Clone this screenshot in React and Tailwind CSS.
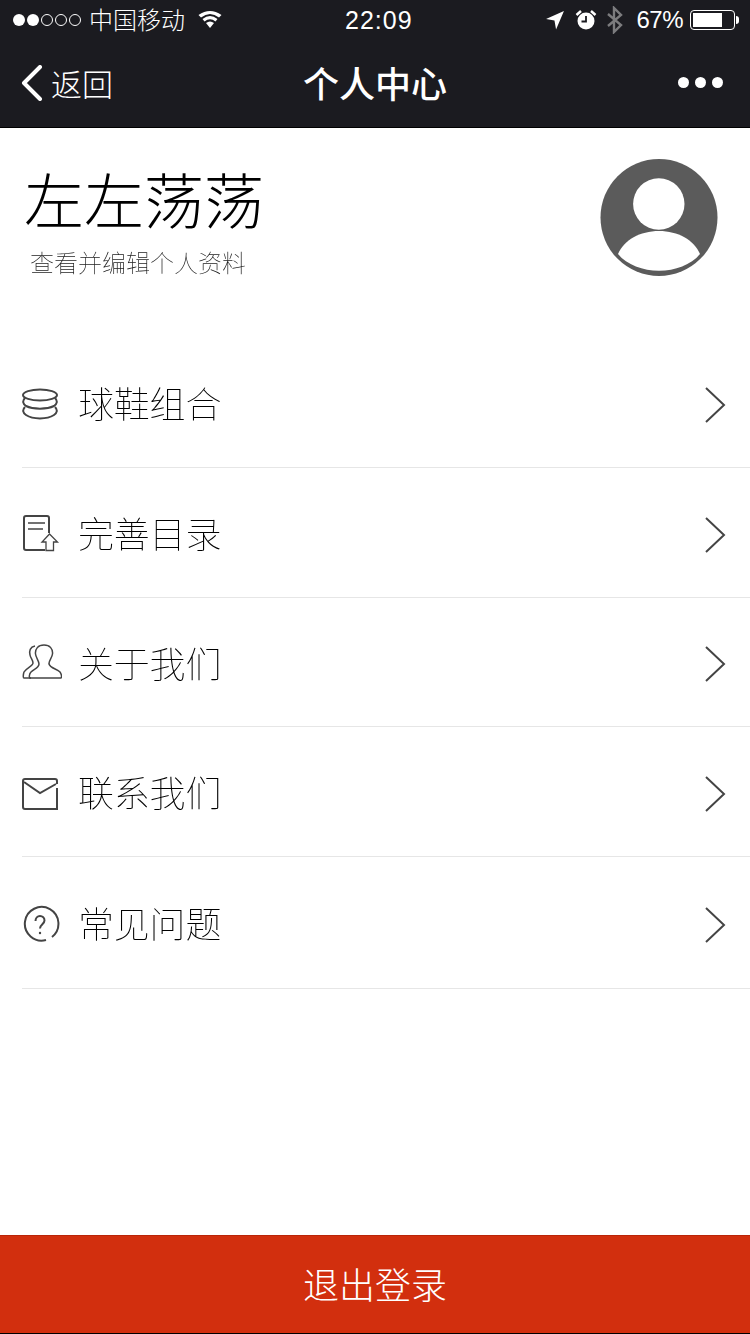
const menuItems = [
  { label: '球鞋组合', icon: 'stack', rowClass: 'h-[130px]' },
  { label: '完善目录', icon: 'doc', rowClass: 'h-[130px]' },
  { label: '关于我们', icon: 'users', rowClass: 'h-[129px]' },
  { label: '联系我们', icon: 'mail', rowClass: 'h-[130px]' },
  { label: '常见问题', icon: 'help', rowClass: 'h-[132px]' },
];

const cjk = { fontFamily: '"Noto Sans CJK SC", sans-serif' };

const MenuIcon = ({ name }) => {
  const common = { width: 40, height: 40, viewBox: '0 0 40 40', fill: 'none', stroke: '#444', strokeWidth: 2 };
  if (name === 'stack') {
    return (
      <svg {...common}>
        <ellipse cx="18" cy="10" rx="17" ry="5.500" />
        <path d="M3 13c-3 3-2 6 1 8 7 3.500 21 3.500 28 0 3-2 4-5 1-8" />
        <path d="M3 22c-3 3-2 6 1 8 7 4.500 21 4.500 28 0 3-2 4-5 1-8" />
      </svg>
    );
  }
  if (name === 'doc') {
    return (
      <svg {...common}>
        <path d="M27 18V3q0-2-2-2H4Q2 1 2 3v30q0 2 2 2h19" />
        <path d="M6 8h17M6 14h15" strokeWidth="1.600" />
        <path d="M24 35.500V27h-4l7.500-8 8 8h-4v8.500z" strokeWidth="1.300" />
      </svg>
    );
  }
  if (name === 'users') {
    return (
      <svg {...common} strokeWidth="1.500">
        <path d="M13 2C8 3 7 7 8 11c.5 3 3 5 3 8 0 3-7 5-9 9-1 3-1 6 0 6h7" />
        <path d="M22 1c-6 0-9 4-8.500 9 .5 4 3.500 7 3.500 10 0 4-5 5-8 8-2 2-2 6-1 6h31c1-1 .5-4-1-6-3-3-10-4-11-8-.5-3 3-6 3.500-10 .5-5-2.500-9-8.500-9z" />
      </svg>
    );
  }
  if (name === 'mail') {
    return (
      <svg {...common}>
        <path d="M35 10V7q0-2-2-2H3Q1 5 1 7v26q0 2 2 2h32V14" />
        <path d="M2 8l16 11 16-9" />
      </svg>
    );
  }
  return (
    <svg {...common}>
      <path d="M24 35A16.800 16.800 0 1 1 30 32" />
      <path d="M13.500 16c0-3 2-5 4.500-5s4.500 2 4.500 4.500c0 3.500-4.500 4-4.500 8" />
      <circle cx="18" cy="28" r="1.200" fill="#444" stroke="none" />
    </svg>
  );
};

const StatusBar = () => (
  <div className="relative flex h-10 items-center pl-[13px] pr-[11px] text-white">
    <div className="flex items-center gap-[2px]">
      <span className="h-[12px] w-[12px] rounded-full bg-white" />
      <span className="h-[12px] w-[12px] rounded-full bg-white" />
      <span className="h-[12px] w-[12px] rounded-full border border-white" />
      <span className="h-[12px] w-[12px] rounded-full border border-white" />
      <span className="h-[12px] w-[12px] rounded-full border border-white" />
    </div>
    <span className="mb-[2px] ml-[8px] text-[24px] leading-none font-light" style={cjk}>中国移动</span>
    <svg className="mb-[1px] ml-[13px]" width="24" height="17" viewBox="0 0 24 17">
      <path d="M12 17l-4-5q4-3 8 0zM6.500 10.500L4.500 8q7.500-6 15 0l-2 2.500q-5.500-4.500-11 0zM3 6.500L.5 4q11.500-8 23 0L21 6.500Q12-.5 3 6.500z" fill="#fff" />
    </svg>
    <span className="absolute left-[345px] top-[7px] text-[25px] leading-[26px] tracking-[1px] font-['Liberation_Sans']">22:09</span>
    <div className="ml-auto flex items-center">
      <svg width="20" height="20" viewBox="0 0 18 19">
        <path d="M17.500 1L10 18.500 8.500 10 .5 8.500z" fill="#fff" />
      </svg>
      <svg className="ml-[10px]" width="22" height="22" viewBox="0 0 22 22">
        <circle cx="11" cy="12" r="8.500" fill="#fff" />
        <path d="M11 7v5.500H6.500" stroke="#1b1b20" strokeWidth="1.800" fill="none" />
        <path d="M1.500 6L6 2M20.500 6L16 2" stroke="#fff" strokeWidth="2.500" />
      </svg>
      <svg className="ml-[9px]" width="17" height="28" viewBox="0 0 17 28">
        <path d="M2 8l13 11-7 7V2l7 7L2 20" stroke="#7c7c7e" strokeWidth="2.400" fill="none" />
      </svg>
      <span className="ml-[13px] text-[24px] leading-none tracking-[-0.5px] font-['Liberation_Sans']">67%</span>
      <div className="ml-[7px] flex items-center">
        <div className="h-[20px] w-[45px] rounded-[4px] border border-white p-[2px]">
          <div className="h-full w-[29px] bg-white" />
        </div>
        <div className="ml-px h-[8px] w-[3px] rounded-r-sm bg-white" />
      </div>
    </div>
  </div>
);

const NavBar = () => (
  <div className="relative flex h-[87px] items-center justify-between pb-[3px] pl-[21px] pr-[27px]">
    <div className="flex items-center text-white">
      <svg className="mt-[2px]" width="22" height="36" viewBox="0 0 22 36" fill="none" stroke="#fff" strokeWidth="4" strokeLinecap="round" strokeLinejoin="round">
        <path d="M19 2L3 18l16 16" />
      </svg>
      <span className="ml-[8px] text-[31px] leading-none font-light" style={cjk}>返回</span>
    </div>
    <div className="absolute inset-x-0 top-[20px] text-center text-[36px] leading-[44px] font-medium text-white" style={cjk}>
      个人中心
    </div>
    <div className="flex items-center gap-[6px]">
      <span className="h-[11px] w-[11px] rounded-full bg-white" />
      <span className="h-[11px] w-[11px] rounded-full bg-white" />
      <span className="h-[11px] w-[11px] rounded-full bg-white" />
    </div>
  </div>
);

const Avatar = () => (
  <svg width="120" height="120" viewBox="0 0 120 120">
    <circle cx="59" cy="59.500" r="58.500" fill="#5b5b5b" />
    <circle cx="58.800" cy="46" r="25.700" fill="#fff" />
    <path d="M18 96C24 82 40 73 59 73s35 9 41 23c-9 11-25 16.700-41 16.700S27 107 18 96z" fill="#fff" />
  </svg>
);

export default function App() {
  return (
    <div className="flex h-[1334px] w-[750px] flex-col overflow-hidden bg-white" style={cjk}>
      <header className="h-[128px] border-b border-black bg-[#1b1b20]">
        <StatusBar />
        <NavBar />
      </header>

      <section className="flex h-[210px] items-start justify-between pl-[24px] pr-[30px] will-change-transform">
        <div>
          <h1 className="mt-[27px] text-[60px] leading-[86px] font-light text-black">左左荡荡</h1>
          <p className="mt-[4px] ml-[6px] text-[24px] leading-[34px] font-thin text-[#222]">查看并编辑个人资料</p>
        </div>
        <div className="mt-[30px]">
          <Avatar />
        </div>
      </section>

      <ul className="flex-1 will-change-transform">
        {menuItems.map((item) => (
          <li key={item.label} className={`${item.rowClass} ml-[22px] flex items-center border-b border-[#e6e6e6] pt-[4px] pr-[24px]`}>
            <MenuIcon name={item.icon} />
            <span className="mb-[5px] ml-[16px] text-[36px] leading-none font-thin tracking-[-0.2px] text-black">{item.label}</span>
            <svg className="ml-auto" width="22" height="38" viewBox="0 0 22 38" fill="none" stroke="#444" strokeWidth="2">
              <path d="M2 2l18 17L2 36" />
            </svg>
          </li>
        ))}
      </ul>

      <button className="h-[99px] border-t border-b border-t-[#b92408] border-b-black bg-[#d22f0e] pb-[4px] text-[36px] font-light text-white">
        退出登录
      </button>
    </div>
  );
}
